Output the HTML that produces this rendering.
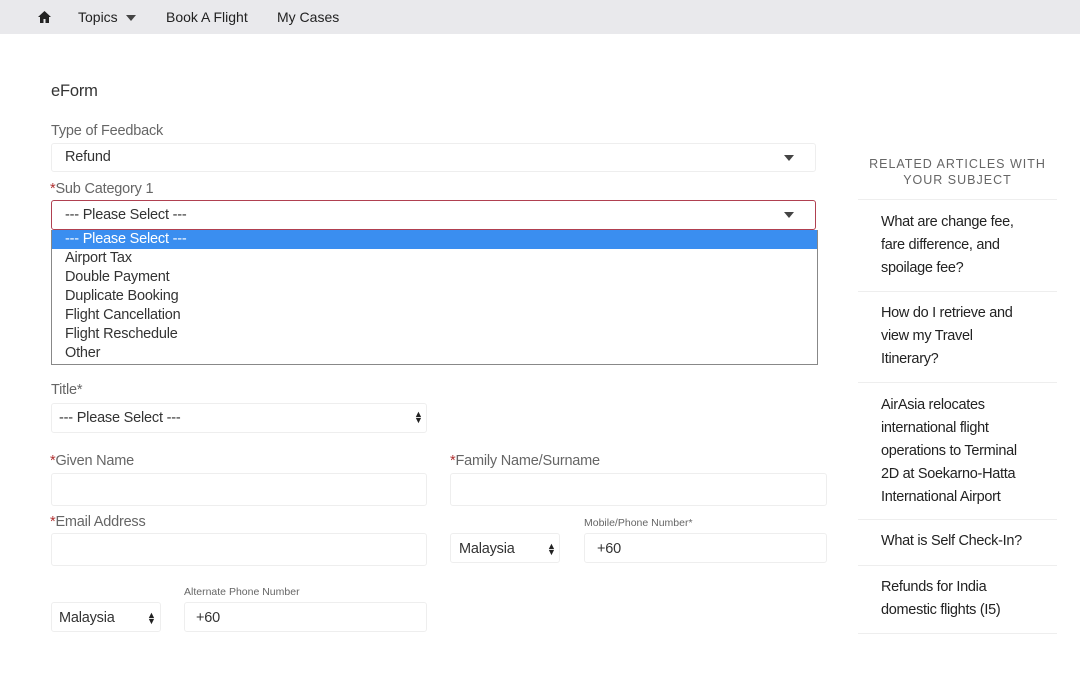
<!DOCTYPE html>
<html><head><meta charset="utf-8"><style>
*{box-sizing:border-box;margin:0;padding:0}
body{width:1080px;height:694px;background:#fff;font-family:"Liberation Sans",sans-serif;position:relative;overflow:hidden;color:#333}
.a{position:absolute}
.nav{left:0;top:0;width:1080px;height:34px;background:#e9e9ec}
.nav span{position:absolute;top:9px;font-size:14px;color:#222}
.lbl{font-size:14.5px;color:#666;letter-spacing:-0.2px}
.req{color:#b03030}
.box{position:absolute;background:#fff;border:1px solid #eeeeee;border-radius:3px}
.tx{position:absolute;font-size:15px;color:#333;letter-spacing:-0.2px}
.caret{position:absolute;width:0;height:0;border-left:5px solid transparent;border-right:5px solid transparent;border-top:6px solid #444}
.ud{position:absolute;font-size:9px;line-height:6px;color:#222}
.dd div{height:19px;font-size:14.5px;line-height:19px;padding-left:13px;color:#333;letter-spacing:-0.2px}
.side{left:858px;width:199px}
.art{position:absolute;left:881px;font-size:14.5px;line-height:23px;color:#222;white-space:nowrap;letter-spacing:-0.3px}
.hr{position:absolute;left:858px;width:199px;height:1px;background:#eeeeee}
</style></head><body>
<div class="a nav">
<svg class="a" style="left:38px;top:11px" width="13" height="12" viewBox="0 0 13 12"><path d="M6.5 0L0 6h2v6h3.5V8h2v4H11V6h2z" fill="#222"/></svg>
<span style="left:78px">Topics</span>
<div class="caret" style="left:126px;top:15px"></div>
<span style="left:166px">Book A Flight</span>
<span style="left:277px">My Cases</span>
</div>
<div class="tx" style="left:51px;top:82px;font-size:16.5px;color:#333">eForm</div>
<div class="a lbl" style="left:51px;top:123px">Type of Feedback</div>
<div class="box" style="left:51px;top:143px;width:765px;height:29px"></div>
<div class="tx" style="left:65px;top:149px;font-size:14.5px">Refund</div>
<div class="caret" style="left:784px;top:155px"></div>
<div class="a lbl" style="left:50px;top:181px"><span class="req">*</span>Sub Category 1</div>
<div class="box" style="left:51px;top:200px;width:765px;height:30px;border:1.5px solid #b04050"></div>
<div class="tx" style="left:65px;top:207px;font-size:14.5px">--- Please Select ---</div>
<div class="caret" style="left:784px;top:212px"></div>
<div class="a dd" style="left:51px;top:230px;width:767px;height:135px;background:#fff;border:1px solid #888;border-top:none">
<div style="background:#3a8ef0;color:#fff">--- Please Select ---</div>
<div>Airport Tax</div><div>Double Payment</div><div>Duplicate Booking</div><div>Flight Cancellation</div><div>Flight Reschedule</div><div>Other</div>
</div>
<div class="a lbl" style="left:51px;top:382px">Title*</div>
<div class="box" style="left:51px;top:403px;width:376px;height:30px"></div>
<div class="tx" style="left:59px;top:410px;font-size:14.5px">--- Please Select ---</div>
<div class="ud" style="left:414px;top:411px">▲<br>▼</div>
<div class="a lbl" style="left:50px;top:453px"><span class="req">*</span>Given Name</div>
<div class="a lbl" style="left:450px;top:453px"><span class="req">*</span>Family Name/Surname</div>
<div class="box" style="left:51px;top:473px;width:376px;height:33px"></div>
<div class="box" style="left:450px;top:473px;width:377px;height:33px"></div>
<div class="a lbl" style="left:50px;top:514px"><span class="req">*</span>Email Address</div>
<div class="a" style="left:584px;top:517px;font-size:10.5px;color:#666">Mobile/Phone Number*</div>
<div class="box" style="left:51px;top:533px;width:376px;height:33px"></div>
<div class="box" style="left:450px;top:533px;width:110px;height:30px"></div>
<div class="tx" style="left:459px;top:541px;font-size:14.5px">Malaysia</div>
<div class="ud" style="left:547px;top:543px">▲<br>▼</div>
<div class="box" style="left:584px;top:533px;width:243px;height:30px"></div>
<div class="tx" style="left:597px;top:541px;font-size:14.5px">+60</div>
<div class="a" style="left:184px;top:586px;font-size:10.5px;color:#666">Alternate Phone Number</div>
<div class="box" style="left:51px;top:602px;width:110px;height:30px"></div>
<div class="tx" style="left:59px;top:610px;font-size:14.5px">Malaysia</div>
<div class="ud" style="left:147px;top:612px">▲<br>▼</div>
<div class="box" style="left:184px;top:602px;width:243px;height:30px"></div>
<div class="tx" style="left:196px;top:610px;font-size:14.5px">+60</div>
<div class="a side" style="top:156px;text-align:center;font-size:12.5px;letter-spacing:1px;color:#666;line-height:16px">RELATED ARTICLES WITH<br>YOUR SUBJECT</div>
<div class="hr" style="top:199px"></div>
<div class="art" style="top:211px">What are change fee,<br>fare difference, and<br>spoilage fee?</div>
<div class="hr" style="top:291px"></div>
<div class="art" style="top:302px">How do I retrieve and<br>view my Travel<br>Itinerary?</div>
<div class="hr" style="top:382px"></div>
<div class="art" style="top:394px">AirAsia relocates<br>international flight<br>operations to Terminal<br>2D at Soekarno-Hatta<br>International Airport</div>
<div class="hr" style="top:519px"></div>
<div class="art" style="top:530px">What is Self Check-In?</div>
<div class="hr" style="top:565px"></div>
<div class="art" style="top:576px">Refunds for India<br>domestic flights (I5)</div>
<div class="hr" style="top:633px"></div>
</body></html>
